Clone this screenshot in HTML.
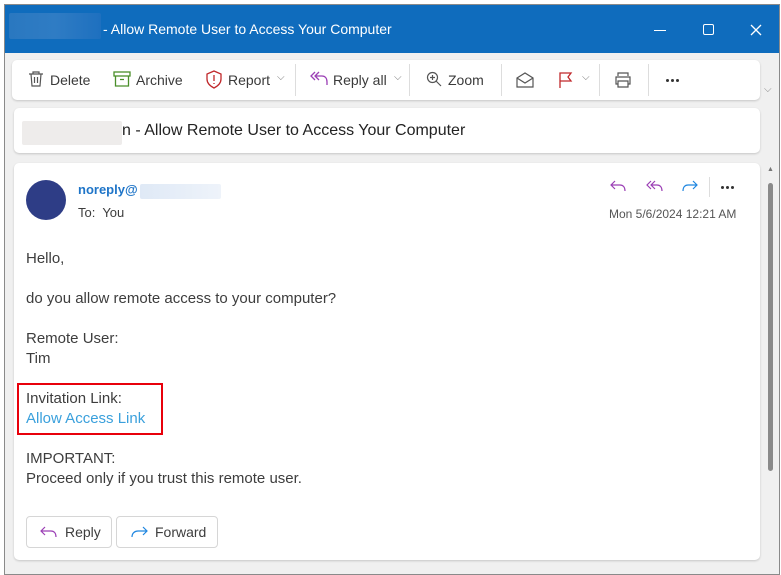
<!DOCTYPE html>
<html><head><meta charset="utf-8"><style>
*{margin:0;padding:0;box-sizing:border-box}
body{width:781px;height:575px;background:#fff;font-family:"Liberation Sans",sans-serif;position:relative;overflow:hidden}
.win{position:absolute;left:4px;top:4px;width:776px;height:571px;border:1px solid #8a8a8a;background:#f0f0f0}
.title{position:absolute;left:0;top:0;width:774px;height:48px;background:#0f6cbd;color:#fff;font-size:14px}
.blur{position:absolute;border-radius:2px}
.card{position:absolute;background:#fff;border-radius:5px;box-shadow:0 1px 2px rgba(0,0,0,.18)}
.abs{position:absolute;white-space:nowrap}
.tb{font-size:14px;color:#3a3a3a;top:12px}
.sep{position:absolute;top:4px;width:1px;height:32px;background:#ddd}
.body{font-size:15px;color:#3d3d3d}
.dots{position:absolute;width:16px;height:4px}
.dots i{position:absolute;top:0;width:3px;height:3px;border-radius:50%;background:#333}
</style></head><body>
<div class="win">
 <div class="title">
  <div class="blur" style="left:4px;top:8px;width:92px;height:26px;background:linear-gradient(90deg,#2a78c0,#2f7cc4,#1e70bf)"></div>
  <div class="abs" style="left:98px;top:16px">- Allow Remote User to Access Your Computer</div>
  <div style="position:absolute;left:649px;top:25px;width:12px;height:1px;background:#fff"></div>
  <div style="position:absolute;left:698px;top:19px;width:11px;height:11px;border:1.3px solid #fff;border-radius:2px"></div>
  <svg class="abs" style="left:745px;top:19px" width="12" height="12" viewBox="0 0 12 12" stroke="#fff" stroke-width="1.3"><path d="M1 1l10 10M11 1L1 11"/></svg>
 </div>
</div>
<div class="card" style="left:12px;top:60px;width:748px;height:40px">
 <svg class="abs" style="left:15px;top:10px" width="18" height="18" viewBox="0 0 18 18" fill="none" stroke="#555" stroke-width="1.2"><path d="M2 4h14M6 4V2h6v2M4 4l1 12h8l1-12M7.5 7v6M10.5 7v6"/></svg>
 <div class="abs tb" style="left:38px">Delete</div>
 <svg class="abs" style="left:101px;top:11px" width="18" height="16" viewBox="0 0 18 16" fill="none" stroke="#4a8f2a" stroke-width="1.3"><rect x="1" y="1" width="16" height="4"/><path d="M2.5 5v10h13V5M7 8.5h4"/></svg>
 <div class="abs tb" style="left:124px">Archive</div>
 <svg class="abs" style="left:193px;top:10px" width="18" height="19" viewBox="0 0 18 19" fill="none" stroke="#c0282b" stroke-width="1.3"><path d="M9 1L16 4v5c0 4-3 7-7 9C5 16 2 13 2 9V4z"/><path d="M9 5v6M9 13v1"/></svg>
 <div class="abs tb" style="left:216px">Report</div>
 <div class="abs" style="left:265px;top:12px;font-size:10px;color:#777">⌵</div>
 <div class="sep" style="left:283px"></div>
 <svg class="abs" style="left:297px;top:10px" width="20" height="18" viewBox="0 0 20 18" fill="none" stroke="#9b3fb5" stroke-width="1.3"><path d="M6 2L2 6l4 4M10 2L6 6l4 4M6 6h7c3 0 5 2 5 6v3"/></svg>
 <div class="abs tb" style="left:321px">Reply all</div>
 <div class="abs" style="left:382px;top:12px;font-size:10px;color:#777">⌵</div>
 <div class="sep" style="left:397px"></div>
 <svg class="abs" style="left:414px;top:11px" width="16" height="16" viewBox="0 0 16 16" fill="none" stroke="#555" stroke-width="1.2"><circle cx="6.5" cy="6.5" r="5"/><path d="M10 10l5 5M4 6.5h5M6.5 4v5"/></svg>
 <div class="abs tb" style="left:436px">Zoom</div>
 <div class="sep" style="left:489px"></div>
 <svg class="abs" style="left:504px;top:11px" width="18" height="17" viewBox="0 0 18 17" fill="none" stroke="#555" stroke-width="1.2"><path d="M1 7l8-5 8 5v9H1zM1 7l8 5 8-5"/></svg>
 <svg class="abs" style="left:546px;top:11px" width="16" height="17" viewBox="0 0 16 17" fill="none" stroke="#c0282b" stroke-width="1.3"><path d="M2 17V2h11l-3 4 3 4H2"/></svg>
 <div class="abs" style="left:570px;top:12px;font-size:10px;color:#777">⌵</div>
 <div class="sep" style="left:587px"></div>
 <svg class="abs" style="left:602px;top:11px" width="18" height="17" viewBox="0 0 18 17" fill="none" stroke="#555" stroke-width="1.2"><path d="M4 5V2h10v3M4 13H2V6h14v7h-2M4 10h10v6H4z"/></svg>
 <div class="sep" style="left:636px"></div>
 <div class="dots" style="left:654px;top:19px"><i style="left:0"></i><i style="left:5px"></i><i style="left:10px"></i></div>
</div>
<div class="abs" style="left:764px;top:84px;font-size:10px;color:#888">⌵</div>
<div class="card" style="left:14px;top:108px;width:746px;height:45px">
 <div class="blur" style="left:8px;top:13px;width:100px;height:24px;background:#eeeceb"></div>
 <div class="abs" style="left:108px;top:14px;font-size:16px;color:#222">n - Allow Remote User to Access Your Computer</div>
</div>
<div class="card" style="left:14px;top:163px;width:746px;height:397px">
 <div style="position:absolute;left:12px;top:17px;width:40px;height:40px;border-radius:50%;background:#2e3d86"></div>
 <div class="abs" style="left:64px;top:19px;font-size:13px;color:#1f75c8;font-weight:bold">noreply@</div>
 <div class="blur" style="left:126px;top:21px;width:81px;height:15px;background:linear-gradient(90deg,#dfe9f6,#eef3fa)"></div>
 <div class="abs" style="left:64px;top:42px;font-size:13px;color:#3d3d3d">To:&nbsp; You</div>
 <svg class="abs" style="left:596px;top:16px" width="16" height="14" viewBox="0 0 16 14" fill="none" stroke="#9b3fb5" stroke-width="1.2"><path d="M5 2L1 6l4 4M1 6h9c3 0 5 2 5 6"/></svg>
 <svg class="abs" style="left:632px;top:16px" width="18" height="14" viewBox="0 0 18 14" fill="none" stroke="#9b3fb5" stroke-width="1.2"><path d="M5 2L1 6l4 4M9 2L5 6l4 4M5 6h6c3 0 5 2 5 6"/></svg>
 <svg class="abs" style="left:668px;top:16px" width="16" height="14" viewBox="0 0 16 14" fill="none" stroke="#1f86e0" stroke-width="1.2"><path d="M11 2l4 4-4 4M15 6H6c-3 0-5 2-5 6"/></svg>
 <div style="position:absolute;left:695px;top:14px;width:1px;height:20px;background:#ddd"></div>
 <div class="dots" style="left:707px;top:23px"><i style="left:0"></i><i style="left:5px"></i><i style="left:10px"></i></div>
 <div class="abs" style="left:595px;top:44px;font-size:12px;color:#555">Mon 5/6/2024 12:21 AM</div>
 <div class="abs body" style="left:12px;top:87px">Hello,</div>
 <div class="abs body" style="left:12px;top:127px">do you allow remote access to your computer?</div>
 <div class="abs body" style="left:12px;top:167px">Remote User:</div>
 <div class="abs body" style="left:12px;top:187px">Tim</div>
 <div style="position:absolute;left:3px;top:220px;width:146px;height:52px;border:2px solid #e8000b"></div>
 <div class="abs body" style="left:12px;top:227px">Invitation Link:</div>
 <div class="abs body" style="left:12px;top:247px;color:#3aa0dc">Allow Access Link</div>
 <div class="abs body" style="left:12px;top:287px">IMPORTANT:</div>
 <div class="abs body" style="left:12px;top:307px">Proceed only if you trust this remote user.</div>
 <div style="position:absolute;left:12px;top:353px;width:86px;height:32px;border:1px solid #d6d6d6;border-radius:4px"></div>
 <svg class="abs" style="left:26px;top:362px" width="18" height="14" viewBox="0 0 18 14" fill="none" stroke="#9b3fb5" stroke-width="1.2"><path d="M5 2L1 6l4 4M1 6h10c3 0 5 2 5 6"/></svg>
 <div class="abs" style="left:51px;top:361px;font-size:14px;color:#3d3d3d">Reply</div>
 <div style="position:absolute;left:102px;top:353px;width:102px;height:32px;border:1px solid #d6d6d6;border-radius:4px"></div>
 <svg class="abs" style="left:116px;top:362px" width="18" height="14" viewBox="0 0 18 14" fill="none" stroke="#1f86e0" stroke-width="1.2"><path d="M13 2l4 4-4 4M17 6H8c-3 0-6 2-6 6"/></svg>
 <div class="abs" style="left:141px;top:361px;font-size:14px;color:#3d3d3d">Forward</div>
</div>
<div class="abs" style="left:767px;top:166px;font-size:7px;color:#777">▲</div>
<div style="position:absolute;left:768px;top:183px;width:5px;height:288px;background:#8a8a8a;border-radius:3px"></div>
</body></html>
